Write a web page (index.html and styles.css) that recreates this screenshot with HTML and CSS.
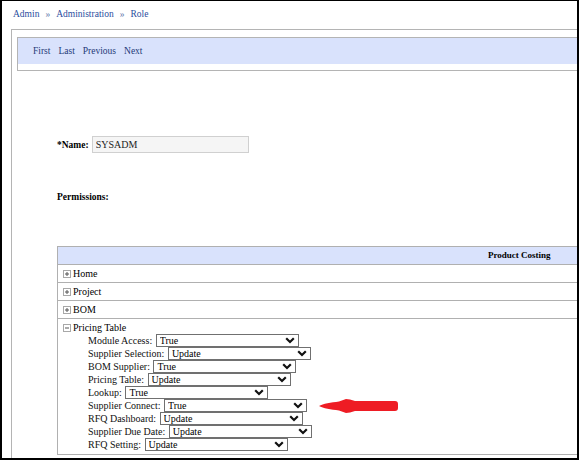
FILE: index.html
```html
<!DOCTYPE html>
<html>
<head>
    <title>Role</title>
    <link rel="stylesheet" href="styles.css">
</head>
<body>
    <div class="page">
        <div class="breadcrumb">
            <a href="#">Admin</a><span class="sep">&raquo;</span><a href="#">Administration</a><span class="sep">&raquo;</span><a href="#">Role</a>
        </div>
        <div class="panel">
            <div class="pager">
                <div class="pager-bar">
                    <a href="#">First</a>
                    <a href="#">Last</a>
                    <a href="#">Previous</a>
                    <a href="#">Next</a>
                </div>
            </div>

            <div class="name-row">
                <label for="roleName">*Name:</label>
                <input id="roleName" type="text" value="SYSADM">
            </div>

            <div class="perm-title">Permissions:</div>

            <div class="perm-table">
                <div class="perm-head"><span>Product Costing</span></div>
                <div class="perm-row">
                    <svg class="toggle" width="8" height="8" viewBox="0 0 8 8"><rect x="0.5" y="0.5" width="7" height="7" fill="#fff" stroke="#a8a8a8"/><path d="M2 4h4M4 2v4" stroke="#555"/></svg>
                    Home
                </div>
                <div class="perm-row">
                    <svg class="toggle" width="8" height="8" viewBox="0 0 8 8"><rect x="0.5" y="0.5" width="7" height="7" fill="#fff" stroke="#a8a8a8"/><path d="M2 4h4M4 2v4" stroke="#555"/></svg>
                    Project
                </div>
                <div class="perm-row">
                    <svg class="toggle" width="8" height="8" viewBox="0 0 8 8"><rect x="0.5" y="0.5" width="7" height="7" fill="#fff" stroke="#a8a8a8"/><path d="M2 4h4M4 2v4" stroke="#555"/></svg>
                    BOM
                </div>
                <div class="perm-row open">
                    <div class="perm-group">
                        <svg class="toggle" width="8" height="8" viewBox="0 0 8 8"><rect x="0.5" y="0.5" width="7" height="7" fill="#fff" stroke="#a8a8a8"/><path d="M2 4h4" stroke="#555"/></svg>
                        Pricing Table
                    </div>
                    <ul class="perm-items" id="permItems"></ul>
                </div>
            </div>
        </div>

        <!-- pointer at the supplier connect setting -->
        <svg class="arrow" width="79" height="16" viewBox="0 0 79 16">
            <path d="M0 8 C4 5.5 12 4.5 20 3.5 L27 1 L31 1.5 L36 3 L76 3 Q79 3 79 6 L79 10 Q79 13 76 13 L36 13 L31 14.5 L27 15 L20 12.5 C12 11.5 4 10.5 0 8 Z" fill="#ee1c24"/>
        </svg>
    </div>

    <script>
        const items = [
            { label: 'Module Access', value: 'True' },
            { label: 'Supplier Selection', value: 'Update' },
            { label: 'BOM Supplier', value: 'True' },
            { label: 'Pricing Table', value: 'Update' },
            { label: 'Lookup', value: 'True' },
            { label: 'Supplier Connect', value: 'True' },
            { label: 'RFQ Dashboard', value: 'Update' },
            { label: 'Supplier Due Date', value: 'Update' },
            { label: 'RFQ Setting', value: 'Update' }
        ];

        const chevron = '<svg class="chevron" width="10" height="7" viewBox="0 0 10 7"><path d="M1.2 1.3 L5 5 L8.8 1.3" fill="none" stroke="#111" stroke-width="2.2"/></svg>';

        const list = document.getElementById('permItems');
        items.forEach(function(item) {
            const li = document.createElement('li');
            const options = ['True', 'False', 'Update', 'View'].map(function(opt) {
                return `<option${opt === item.value ? ' selected' : ''}>${opt}</option>`;
            }).join('');
            li.innerHTML = `${item.label}: <span class="select"><select>${options}</select>${chevron}</span>`;
            list.appendChild(li);
        });
    </script>
</body>
</html>
```

FILE: styles.css
```css
body {
    margin: 0;
    font-family: "Liberation Serif", "Times New Roman", serif;
    background-color: #fff;
}
.page {
    position: relative;
    width: 579px;
    height: 460px;
    box-sizing: border-box;
    border: 2px solid #000;
    border-top-width: 1px;
    overflow: hidden;
}
.breadcrumb {
    padding: 7px 0 0 11px;
    height: 12px;
    line-height: 12px;
    font-size: 9.5px;
}
.breadcrumb a {
    color: #2a4d9e;
    text-decoration: none;
}
.breadcrumb .sep {
    color: #6b7fb0;
    margin: 0 6px;
}
.panel {
    margin: 9px 0 0 9px;
    width: 700px;
    height: 600px;
    padding: 7px 0 0 5px;
    border: 1px solid #b4b4b4;
}
.pager {
    border: 1px solid #b4b4b4;
    padding-bottom: 6px;
}
.pager-bar {
    background-color: #d9e2fc;
    height: 26px;
    line-height: 26px;
    padding-left: 15px;
    font-size: 9.5px;
    display: flex;
    gap: 8px;
}
.pager-bar a {
    color: #1f3a78;
    text-decoration: none;
}
.name-row {
    display: flex;
    align-items: center;
    gap: 3px;
    margin: 65px 0 0 40px;
    height: 17px;
    font-size: 9.5px;
}
.name-row label {
    font-weight: bold;
}
.name-row input {
    width: 157px;
    height: 17px;
    box-sizing: border-box;
    margin: 0;
    padding: 0 3px;
    border: 1px solid #d0d0d0;
    background-color: #f5f5f5;
    font-family: inherit;
    font-size: 10px;
    color: #222;
}
.perm-title {
    margin: 38px 0 0 40px;
    line-height: 12px;
    font-size: 9.5px;
    font-weight: bold;
}
.perm-table {
    margin: 43px 0 0 40px;
    width: 600px;
    border-top: 1px solid #b0b0b0;
    border-left: 1px solid #b0b0b0;
    font-size: 10px;
}
.perm-head {
    background-color: #d9e2fc;
    height: 17px;
    line-height: 17px;
    padding-left: 430px;
    font-size: 9px;
    font-weight: bold;
    border-bottom: 1px solid #b0b0b0;
}
.perm-row {
    height: 17px;
    line-height: 17px;
    padding-left: 5px;
    border-bottom: 1px solid #b0b0b0;
    display: flex;
    align-items: center;
    gap: 2px;
}
.perm-row.open {
    height: auto;
    display: block;
    padding-top: 2px;
    padding-bottom: 3px;
}
.perm-group {
    display: flex;
    align-items: center;
    gap: 2px;
    height: 13px;
}
.toggle {
    flex: none;
}
.perm-items {
    list-style: none;
    margin: 0;
    padding: 0 0 0 25px;
}
.perm-items li {
    height: 13px;
    line-height: 13px;
    display: flex;
    align-items: center;
    white-space: pre;
    color: #111;
}
.select {
    position: relative;
    display: inline-block;
    margin-left: 1px;
}
.select select {
    appearance: none;
    -webkit-appearance: none;
    display: block;
    width: 143px;
    height: 13px;
    margin: 0;
    padding: 0 0 0 3px;
    border: 1px solid #707070;
    border-radius: 0;
    background-color: #fff;
    font-family: inherit;
    font-size: 10px;
    line-height: 11px;
    color: #000;
}
.chevron {
    position: absolute;
    right: 4px;
    top: 3px;
    pointer-events: none;
}
.arrow {
    position: absolute;
    left: 317px;
    top: 397px;
}
```
